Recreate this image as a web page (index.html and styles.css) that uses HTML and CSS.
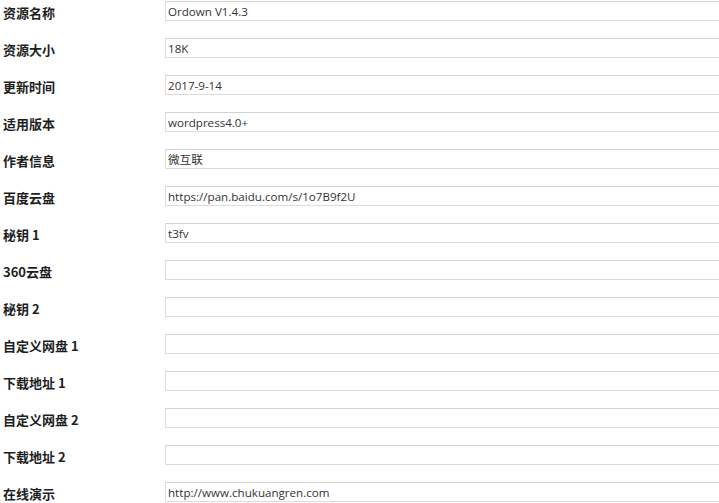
FILE: index.html
```html
<!DOCTYPE html>
<html lang="zh">
<head>
<meta charset="utf-8">
<title>资源信息</title>
<link rel="stylesheet" href="styles.css">
</head>
<body>
<div class="form">
  <div class="row"><label class="label">资源名称</label><input class="field" value="Ordown V1.4.3"></div>
  <div class="row"><label class="label">资源大小</label><input class="field" value="18K"></div>
  <div class="row"><label class="label">更新时间</label><input class="field" value="2017-9-14"></div>
  <div class="row"><label class="label">适用版本</label><input class="field" value="wordpress4.0+"></div>
  <div class="row"><label class="label">作者信息</label><input class="field" value="微互联"></div>
  <div class="row"><label class="label">百度云盘</label><input class="field" value="https://pan.baidu.com/s/1o7B9f2U"></div>
  <div class="row"><label class="label">秘钥 1</label><input class="field" value="t3fv"></div>
  <div class="row"><label class="label">360云盘</label><input class="field" value=""></div>
  <div class="row"><label class="label">秘钥 2</label><input class="field" value=""></div>
  <div class="row"><label class="label">自定义网盘 1</label><input class="field" value=""></div>
  <div class="row"><label class="label">下载地址 1</label><input class="field" value=""></div>
  <div class="row"><label class="label">自定义网盘 2</label><input class="field" value=""></div>
  <div class="row"><label class="label">下载地址 2</label><input class="field" value=""></div>
  <div class="row"><label class="label">在线演示</label><input class="field" value="http://www.chukuangren.com"></div>
</div>
</body>
</html>
```
FILE: styles.css
```css
html, body {
  margin: 0;
  padding: 0;
  background: #fff;
  overflow: hidden;
}
body {
  font-family: "Noto Sans CJK SC", "Liberation Sans", sans-serif;
  color: #222;
}
.form {
  display: flex;
  flex-direction: column;
  padding-top: 1px;
}
.row {
  display: grid;
  grid-template-columns: 165px 1fr;
  height: 37px;
  overflow: hidden;
}
.label {
  font-size: 13px;
  font-weight: bold;
  line-height: 20px;
  padding-left: 3px;
  padding-top: 2px;
  color: #1e1e1e;
}
.field {
  box-sizing: border-box;
  width: calc(100% + 20px);
  height: 20px;
  margin: 0;
  border: 1px solid #dcdcdc;
  border-top-color: #d2d2d2;
  padding: 0 2px;
  font-family: "Open Sans", "Noto Sans CJK SC", sans-serif;
  font-size: 11.6px;
  color: #333;
  background: #fff;
  outline: none;
}
```
